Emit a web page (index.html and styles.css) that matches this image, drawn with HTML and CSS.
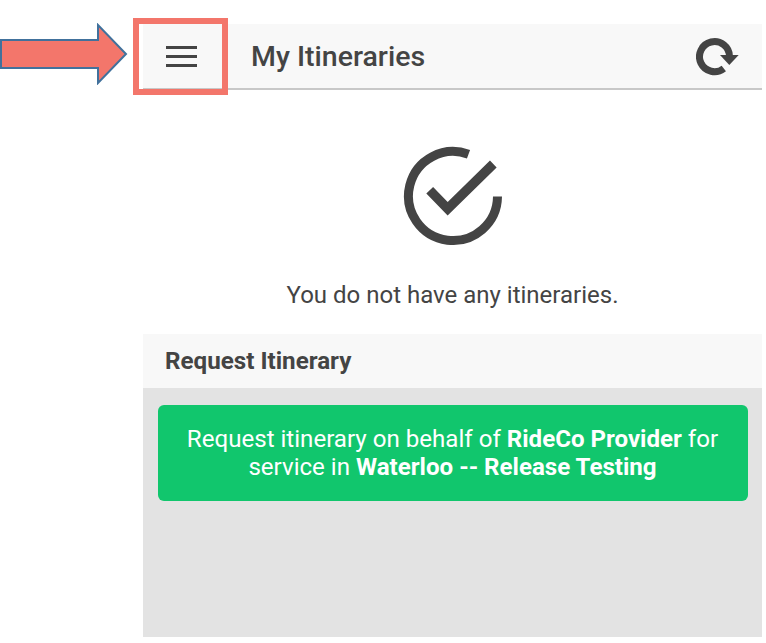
FILE: index.html
```html
<!DOCTYPE html>
<html lang="en">
<head>
    <meta charset="UTF-8">
    <title>My Itineraries</title>
    <link rel="stylesheet" href="styles.css">
</head>
<body>
    <!-- annotation drawn over the screenshot -->
    <svg class="callout-arrow" width="128" height="62" viewBox="0 0 128 62">
        <path d="M1 17H98V2L126 31L98 60V45H1Z" fill="#f3766b" stroke="#41719c" stroke-width="2"/>
    </svg>
    <div class="callout-box"></div>

    <div class="screen">
        <div class="topbar">
            <div class="menu-btn">
                <span></span>
                <span></span>
                <span></span>
            </div>
            <div class="title">My Itineraries</div>
            <svg class="refresh" width="44" height="40" viewBox="0 0 44 40">
                <path d="M27.800 32.400A15 15 0 1 1 33.500 20.500" fill="none" stroke="#444" stroke-width="7"/>
                <path d="M24 19H42.700L33.300 29Z" fill="#444"/>
            </svg>
        </div>

        <div class="empty">
            <svg class="check" width="100" height="100" viewBox="0 0 100 100">
                <path d="M65.500 8.300A44.500 44.500 0 1 0 94.500 50.500" fill="none" stroke="#444" stroke-width="9"/>
                <path d="M26.700 44.300L44.700 62.700L90.300 18" fill="none" stroke="#444" stroke-width="9.500"/>
            </svg>
            <p class="empty-text">You do not have any itineraries.</p>
        </div>

        <div class="panel-head">Request Itinerary</div>
        <div class="panel-body">
            <div class="request-btn">
                Request itinerary on behalf of <strong>RideCo Provider</strong> for
                service in <strong>Waterloo -- Release Testing</strong>
            </div>
        </div>
    </div>
</body>
</html>
```

FILE: styles.css
```css
body {
    margin: 0;
    background-color: white;
    font-family: Roboto, sans-serif;
    color: #444;
}
.callout-arrow {
    position: absolute;
    left: 0;
    top: 23px;
}
.callout-box {
    position: absolute;
    left: 133px;
    top: 18px;
    width: 83px;
    height: 65px;
    border: 6px solid #f3766b;
}
.screen {
    width: 619px;
    height: 613px;
    margin: 24px 0 0 143px;
    display: flex;
    flex-direction: column;
}
.topbar {
    height: 64px;
    flex: none;
    display: flex;
    align-items: center;
    background-color: #f8f8f8;
    border-bottom: 2px solid #c8c8c8;
}
.menu-btn {
    width: 77px;
    flex: none;
    display: flex;
    flex-direction: column;
    align-items: center;
    gap: 6px;
}
.menu-btn span {
    width: 31px;
    height: 3px;
    background-color: #444;
}
.title {
    flex: 1;
    margin-left: 31px;
    font-size: 28.5px;
    font-weight: 500;
}
.refresh {
    margin-right: 22px;
}
.empty {
    height: 244px;
    flex: none;
    display: flex;
    flex-direction: column;
    align-items: center;
    padding-top: 56px;
    box-sizing: border-box;
}
.check {
    margin-left: 1px;
}
.empty-text {
    margin: 34px 0 0;
    font-size: 24px;
    line-height: 30px;
}
.panel-head {
    height: 54px;
    flex: none;
    display: flex;
    align-items: center;
    padding-left: 22px;
    background-color: #f8f8f8;
    font-size: 24.2px;
    font-weight: 700;
}
.panel-body {
    flex: 1;
    background-color: #e3e3e3;
    padding: 17px 14px 0 15px;
}
.request-btn {
    height: 96px;
    box-sizing: border-box;
    padding: 20px 25px 0 24px;
    background-color: #11c66d;
    border-radius: 6px;
    color: white;
    font-size: 24.1px;
    line-height: 28px;
    text-align: center;
}
```
